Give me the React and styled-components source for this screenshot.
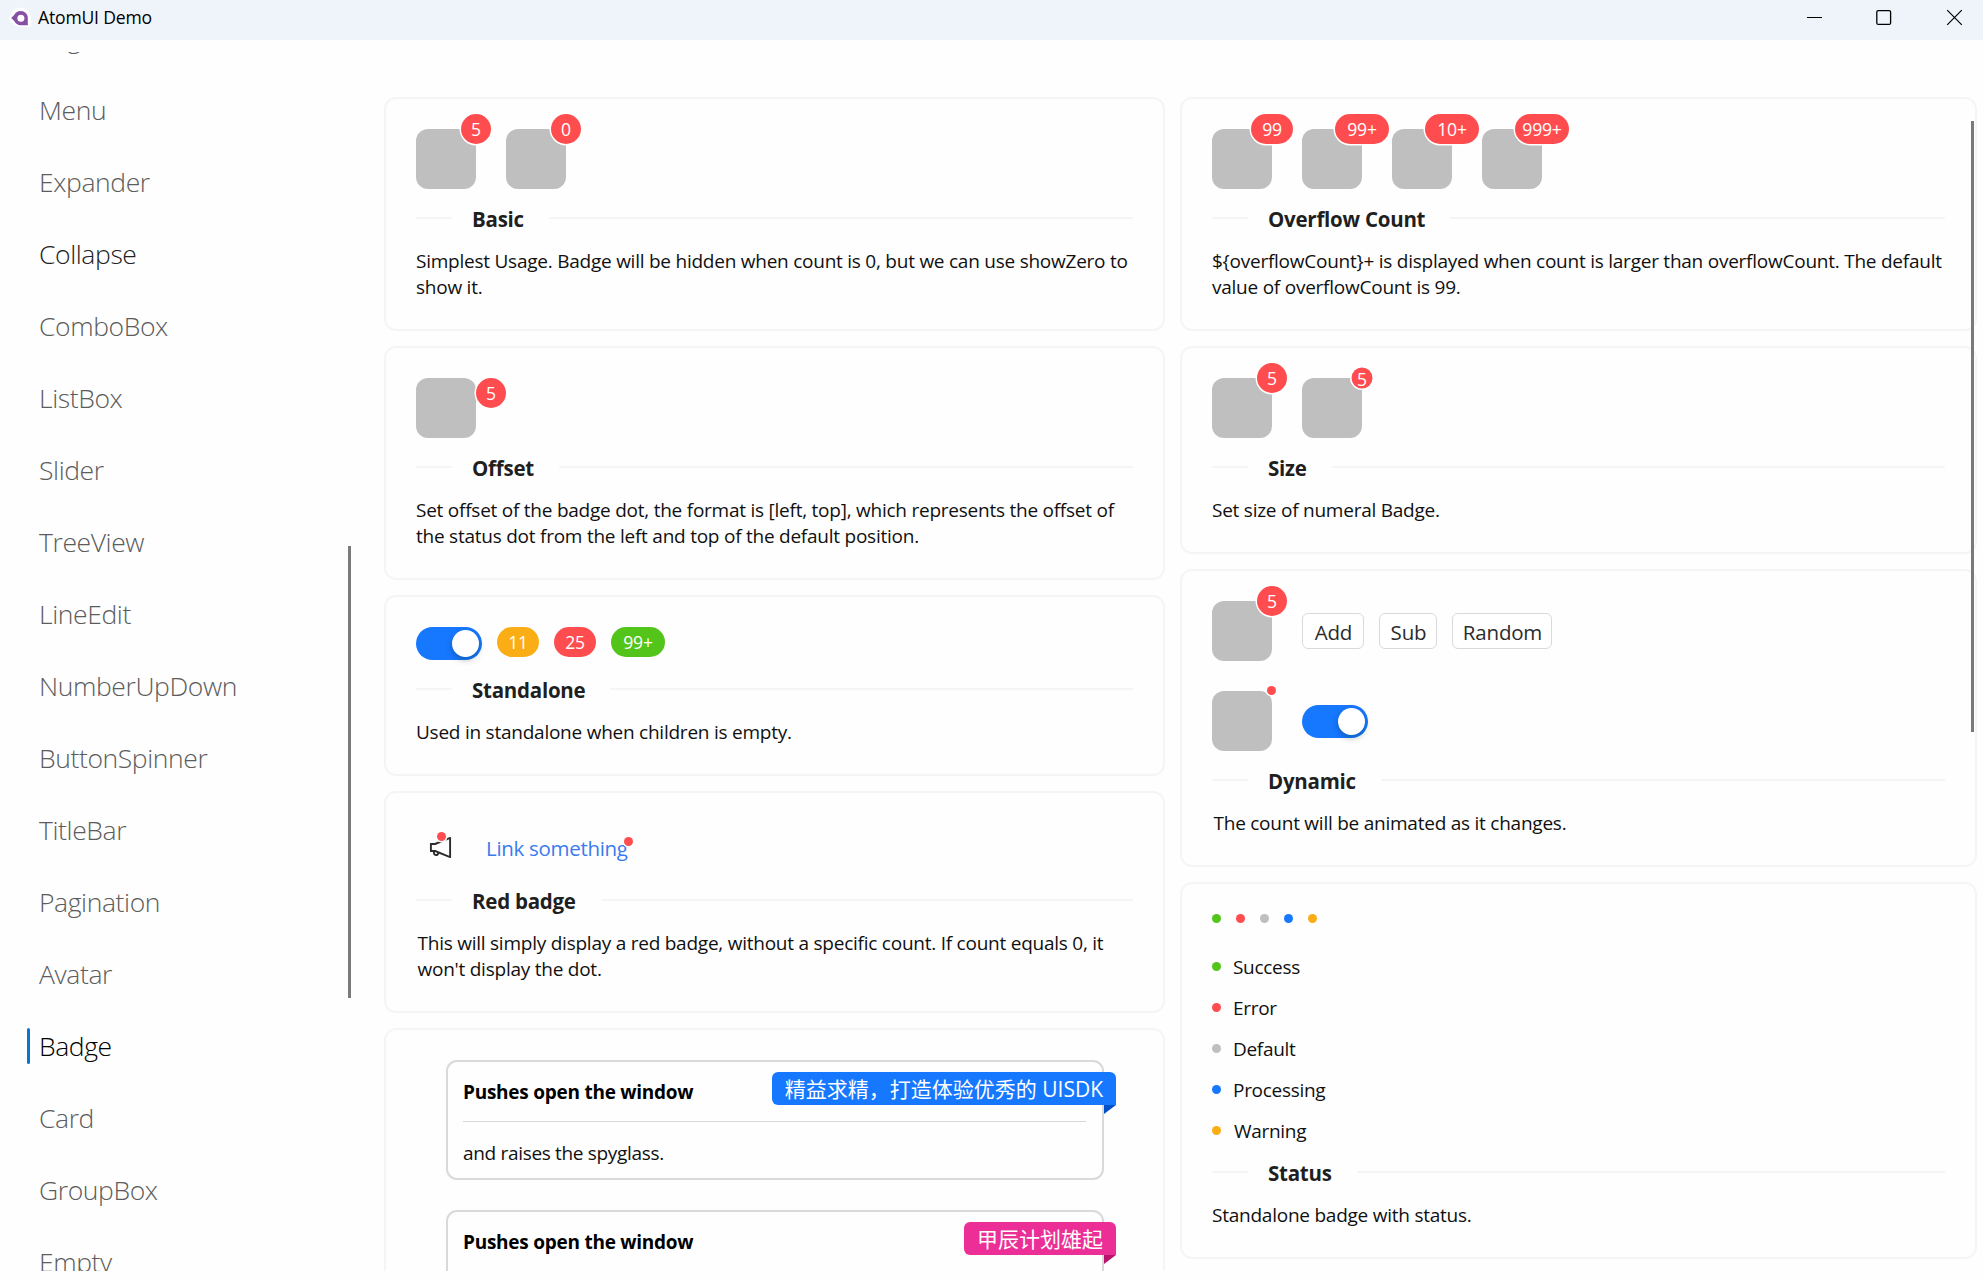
import React from "react";
import styled, { createGlobalStyle } from "styled-components";
import { AiOutlineNotification } from "react-icons/ai";

const color = {
  red: "#ff4d4f",
  orange: "#faad14",
  green: "#52c41a",
  blue: "#1677ff",
  grey: "#bfbfbf",
  magenta: "#eb2f96",
  line: "#f5f5f5",
  border: "#d9d9d9",
  page: "#fefefe",
};

const GlobalStyle = createGlobalStyle`
  * { box-sizing: border-box; }
  body {
    margin: 0;
    overflow: hidden;
    background: ${color.page};
    color: #101010;
    font-family: "Open Sans", "Noto Sans CJK SC", sans-serif;
  }
`;

const Window = styled.div`
  display: flex;
  flex-direction: column;
  width: 1983px;
  height: 1279px;
  overflow: hidden;
`;

const TitleBar = styled.header`
  display: flex;
  align-items: center;
  flex: none;
  height: 40px;
  padding: 0 20px 5px 9px;
  background: #eff3fa;
`;

const WindowTitle = styled.h1`
  flex: 1;
  margin: 0 0 0 7px;
  padding-bottom: 1px;
  font-size: 17.6px;
  font-weight: 400;
  line-height: 24px;
  letter-spacing: -0.2px;
  color: #000;
`;

const WindowButtons = styled.div`
  display: flex;
  gap: 53px;

  svg {
    display: block;
    fill: none;
    stroke: #000;
  }
`;

const Body = styled.div`
  display: flex;
  height: 1219px;
  margin-top: 12px;
  overflow: hidden;
`;

const Sidebar = styled.nav`
  display: flex;
  width: 351px;
  flex: none;
`;

const NavList = styled.ul`
  flex: 1;
  margin: -50px 0 0;
  padding: 0;
  list-style: none;
`;

const navTone = { idle: "#5c5c5c", hover: "#222", active: "#000" };

const NavItem = styled.li`
  display: flex;
  align-items: center;
  gap: 9px;
  height: 72px;
  padding-left: 27px;
  font-size: 26.5px;
  font-weight: 300;
  line-height: 36px;
  letter-spacing: -0.4px;
  color: ${(p) => navTone[p.$state]};
`;

const NavMark = styled.span`
  width: 3px;
  height: 36px;
  border-radius: 1.5px;
  background: ${(p) => (p.$on ? "#0a74d1" : "transparent")};
`;

const SideThumb = styled.div`
  width: 3px;
  height: 452px;
  margin-top: 494px;
  background: #7a7a7a;
`;

const Main = styled.main`
  position: relative;
  flex: 1;
  display: grid;
  grid-template-columns: 781px 797px;
  align-items: start;
  gap: 15px;
  padding: 45px 0 0 33px;
`;

const MainThumb = styled.div`
  position: absolute;
  top: 69px;
  right: 9px;
  width: 3px;
  height: 611px;
  background: #7a7a7a;
`;

const Column = styled.div`
  display: flex;
  flex-direction: column;
  gap: 15px;
`;

const Card = styled.section`
  padding: 30px 30px 29px;
  border: 2px solid ${color.line};
  border-radius: 12px;
  background: ${color.page};
`;

const Divider = styled.div`
  display: flex;
  align-items: center;
  height: 28px;
  margin: 15px 0 16px;

  &::before,
  &::after {
    content: "";
    width: 36px;
    height: 2px;
    background: ${color.line};
  }
  &::after { flex: 1; }
`;

const CardTitle = styled.h2`
  margin: 0;
  padding: 2px 25px 0 20px;
  font-size: 20.5px;
  font-weight: 700;
  line-height: 26px;
  letter-spacing: -0.25px;
  color: #1f1f1f;
`;

const Description = styled.p`
  margin: 0 -10px 0 ${(p) => (p.$inset ? 1.5 : 0)}px;
  font-size: 19px;
  line-height: 26px;
  letter-spacing: -0.24px;
`;

const Row = styled.div`
  display: flex;
  align-items: ${(p) => p.$align || "center"};
  gap: ${(p) => (p.$gap === undefined ? 30 : p.$gap)}px;
`;

const Stack = styled.div`
  display: flex;
  flex-direction: column;
  gap: ${(p) => p.$gap || 30}px;
`;

const Anchor = styled.div`
  position: relative;
  flex: none;
  width: 60px;
  height: 60px;
  border-radius: 12px;
  background: ${color.grey};
`;

const Count = styled.span`
  display: inline-flex;
  align-items: center;
  justify-content: center;
  height: ${(p) => (p.$small ? 21 : 30)}px;
  min-width: ${(p) => p.$width || (p.$small ? 21 : 30)}px;
  border-radius: 15px;
  background: ${(p) => color[p.$tone || "red"]};
  color: #fff;
  font-size: 17.6px;
  line-height: 24px;
  letter-spacing: -0.2px;
`;

const FloatingCount = styled(Count)`
  position: absolute;
  top: ${(p) => p.$y || 0}px;
  left: ${(p) => 60 + (p.$x || 0)}px;
  transform: translate(-50%, -50%);
  box-shadow: 0 0 0 1.5px #fff;
`;

const Dot = styled.span`
  display: block;
  flex: none;
  width: 9px;
  height: 9px;
  border-radius: 50%;
  background: ${(p) => color[p.$tone || "red"]};
`;

const FloatingDot = styled(Dot)`
  position: absolute;
  top: ${(p) => p.$y}px;
  right: ${(p) => p.$right}px;
  box-shadow: 0 0 0 1.5px #fff;
`;

const Switch = styled.span`
  display: flex;
  justify-content: flex-end;
  width: 66px;
  height: 33px;
  padding: 3px;
  border-radius: 17px;
  background: ${color.blue};

  &::after {
    content: "";
    width: 27px;
    height: 27px;
    border-radius: 50%;
    background: #fff;
    box-shadow: 0 3px 6px rgba(0, 35, 11, 0.28);
  }
`;

const Button = styled.button`
  width: ${(p) => p.$width}px;
  height: 36px;
  padding: 1px 0 0 1px;
  border: 1px solid ${color.border};
  border-radius: 6px;
  background: #fff;
  color: #2b2b2b;
  font-family: inherit;
  font-size: 20.5px;
  line-height: 28px;
  letter-spacing: -0.2px;
`;

const IconBox = styled.div`
  position: relative;
  display: flex;
  align-items: center;
  justify-content: center;
  width: 48px;
  height: 48px;
  color: #2b2b2b;
`;

const Link = styled.a`
  position: relative;
  margin-left: 22px;
  padding-top: 1px;
  color: #3a7bef;
  font-size: 20.5px;
  line-height: 28px;
  letter-spacing: -0.3px;
`;

const StatusLabel = styled.span`
  margin-left: ${(p) => (p.$inset ? 1 : 0)}px;
  padding-top: 2px;
  margin-bottom: -1px;
  font-size: 19px;
  line-height: 25px;
  letter-spacing: -0.3px;
`;

const Panels = styled(Stack)`
  padding: 0 29px 0 30px;
`;

const Panel = styled.div`
  position: relative;
  height: 120px;
  padding: 15px 16px 0 15px;
  border: 2px solid ${color.border};
  border-radius: 11px;
  background: ${color.page};
`;

const PanelTitle = styled.h3`
  margin: 0;
  padding: 2px 0 16px;
  border-bottom: 1px solid ${color.border};
  font-size: 19px;
  font-weight: 700;
  line-height: 26px;
  letter-spacing: -0.25px;
  color: #000;
`;

const PanelText = styled.p`
  margin: 18px 0 0;
  font-size: 19px;
  line-height: 26px;
  letter-spacing: -0.32px;
`;

const Ribbon = styled.span`
  position: absolute;
  top: 10px;
  right: -14px;
  height: 33px;
  padding: 1px 13px 0;
  border-radius: 6px 6px 0 6px;
  background: ${(p) => color[p.$tone]};
  color: #fff;
  font-size: 21px;
  line-height: 33px;
  white-space: nowrap;

  &::after {
    content: "";
    position: absolute;
    top: 100%;
    right: 0;
    border: solid transparent;
    border-width: 0 12px 9px 0;
    border-top: 9px solid ${(p) => p.$fold};
    border-bottom: 0;
  }
`;

const AppLogo = () => (
  <svg width="22" height="22" viewBox="0 0 22 22">
    <path d="M11.5 0.5C15 0.5 22 4 22 11V20H11.5C6 20 2 16 0 11C2 5 6 0.5 11.5 0.5Z" fill="#fff" opacity="0.85" />
    <path d="M2.2 11L5.200 8C6.500 5.400 8.800 4.100 11.700 4.100C15.600 4.100 18.800 7 18.800 11V18.200H11.700C8.800 18.200 6.500 16.600 5.200 14Z" fill="#8650a3" />
    <circle cx="11.900" cy="11.200" r="3.500" fill="#fff" />
  </svg>
);

const pages = [
  "Segmented", "Menu", "Expander", "Collapse", "ComboBox", "ListBox",
  "Slider", "TreeView", "LineEdit", "NumberUpDown", "ButtonSpinner", "TitleBar",
  "Pagination", "Avatar", "Badge", "Card", "GroupBox", "Empty",
];
const stateOf = (name) => (name === "Badge" ? "active" : name === "Collapse" ? "hover" : "idle");

const statuses = [
  ["Success", "green"],
  ["Error", "red"],
  ["Default", "grey"],
  ["Processing", "blue"],
  ["Warning", "orange"],
];

const Demo = ({ title, text, inset, children }) => (
  <Card>
    {children}
    <Divider>
      <CardTitle>{title}</CardTitle>
    </Divider>
    <Description $inset={inset}>{text}</Description>
  </Card>
);

export default function App() {
  return (
    <Window>
      <GlobalStyle />
      <TitleBar>
        <AppLogo />
        <WindowTitle>AtomUI Demo</WindowTitle>
        <WindowButtons>
          <svg width="17" height="17" viewBox="0 0 17 17"><path d="M1 8.500H16" /></svg>
          <svg width="17" height="17" viewBox="0 0 17 17"><rect x="0.800" y="1.600" width="13.800" height="13.800" rx="1.500" strokeWidth="1.300" /></svg>
          <svg width="17" height="17" viewBox="0 0 17 17"><path d="M1.200 1.200L15.800 15.800M15.800 1.200L1.200 15.800" strokeWidth="1.200" /></svg>
        </WindowButtons>
      </TitleBar>
      <Body>
        <Sidebar>
          <NavList>
            {pages.map((name) => (
              <NavItem key={name} $state={stateOf(name)}>
                <NavMark $on={name === "Badge"} />
                {name}
              </NavItem>
            ))}
          </NavList>
          <SideThumb />
        </Sidebar>
        <Main>
          <Column>
            <Demo title="Basic" text="Simplest Usage. Badge will be hidden when count is 0, but we can use showZero to show it.">
              <Row>
                <Anchor><FloatingCount>5</FloatingCount></Anchor>
                <Anchor><FloatingCount>0</FloatingCount></Anchor>
              </Row>
            </Demo>
            <Demo title="Offset" text="Set offset of the badge dot, the format is [left, top], which represents the offset of the status dot from the left and top of the default position.">
              <Anchor><FloatingCount $x={15} $y={15}>5</FloatingCount></Anchor>
            </Demo>
            <Demo title="Standalone" text="Used in standalone when children is empty.">
              <Row $gap={15} $align="flex-start">
                <Switch />
                <Count $tone="orange" $width={42}>11</Count>
                <Count $width={42}>25</Count>
                <Count $tone="green" $width={54}>99+</Count>
              </Row>
            </Demo>
            <Demo inset title="Red badge" text="This will simply display a red badge, without a specific count. If count equals 0, it won't display the dot.">
              <Row $gap={0}>
                <IconBox>
                  <AiOutlineNotification size={27} />
                  <FloatingDot $y={9} $right={18} />
                </IconBox>
                <Link>
                  Link something
                  <FloatingDot $y={4} $right={-5} />
                </Link>
              </Row>
            </Demo>
            <Card>
              <Panels>
                <Panel>
                  <PanelTitle>Pushes open the window</PanelTitle>
                  <PanelText>and raises the spyglass.</PanelText>
                  <Ribbon $tone="blue" $fold="#0050c8">精益求精，打造体验优秀的 UISDK</Ribbon>
                </Panel>
                <Panel>
                  <PanelTitle>Pushes open the window</PanelTitle>
                  <PanelText>and raises the spyglass.</PanelText>
                  <Ribbon $tone="magenta" $fold="#b8146e">甲辰计划雄起</Ribbon>
                </Panel>
              </Panels>
            </Card>
          </Column>
          <Column>
            <Demo title="Overflow Count" text="${overflowCount}+ is displayed when count is larger than overflowCount. The default value of overflowCount is 99.">
              <Row>
                <Anchor><FloatingCount $width={42}>99</FloatingCount></Anchor>
                <Anchor><FloatingCount $width={54}>99+</FloatingCount></Anchor>
                <Anchor><FloatingCount $width={54}>10+</FloatingCount></Anchor>
                <Anchor><FloatingCount $width={54}>999+</FloatingCount></Anchor>
              </Row>
            </Demo>
            <Demo title="Size" text="Set size of numeral Badge.">
              <Row>
                <Anchor><FloatingCount>5</FloatingCount></Anchor>
                <Anchor><FloatingCount $small>5</FloatingCount></Anchor>
              </Row>
            </Demo>
            <Demo inset title="Dynamic" text="The count will be animated as it changes.">
              <Stack>
                <Row>
                  <Anchor><FloatingCount>5</FloatingCount></Anchor>
                  <Row $gap={15}>
                    <Button $width={62}>Add</Button>
                    <Button $width={58}>Sub</Button>
                    <Button $width={100}>Random</Button>
                  </Row>
                </Row>
                <Row>
                  <Anchor><FloatingDot $y={-5} $right={-4} /></Anchor>
                  <Switch />
                </Row>
              </Stack>
            </Demo>
            <Demo title="Status" text="Standalone badge with status.">
              <Stack>
                <Row $gap={15}>
                  {statuses.map(([name, tone]) => <Dot key={name} $tone={tone} />)}
                </Row>
                <Stack $gap={15}>
                  {statuses.map(([name, tone]) => (
                    <Row key={name} $gap={12}>
                      <Dot $tone={tone} />
                      <StatusLabel $inset={name === "Warning"}>{name}</StatusLabel>
                    </Row>
                  ))}
                </Stack>
              </Stack>
            </Demo>
          </Column>
          <MainThumb />
        </Main>
      </Body>
    </Window>
  );
}
